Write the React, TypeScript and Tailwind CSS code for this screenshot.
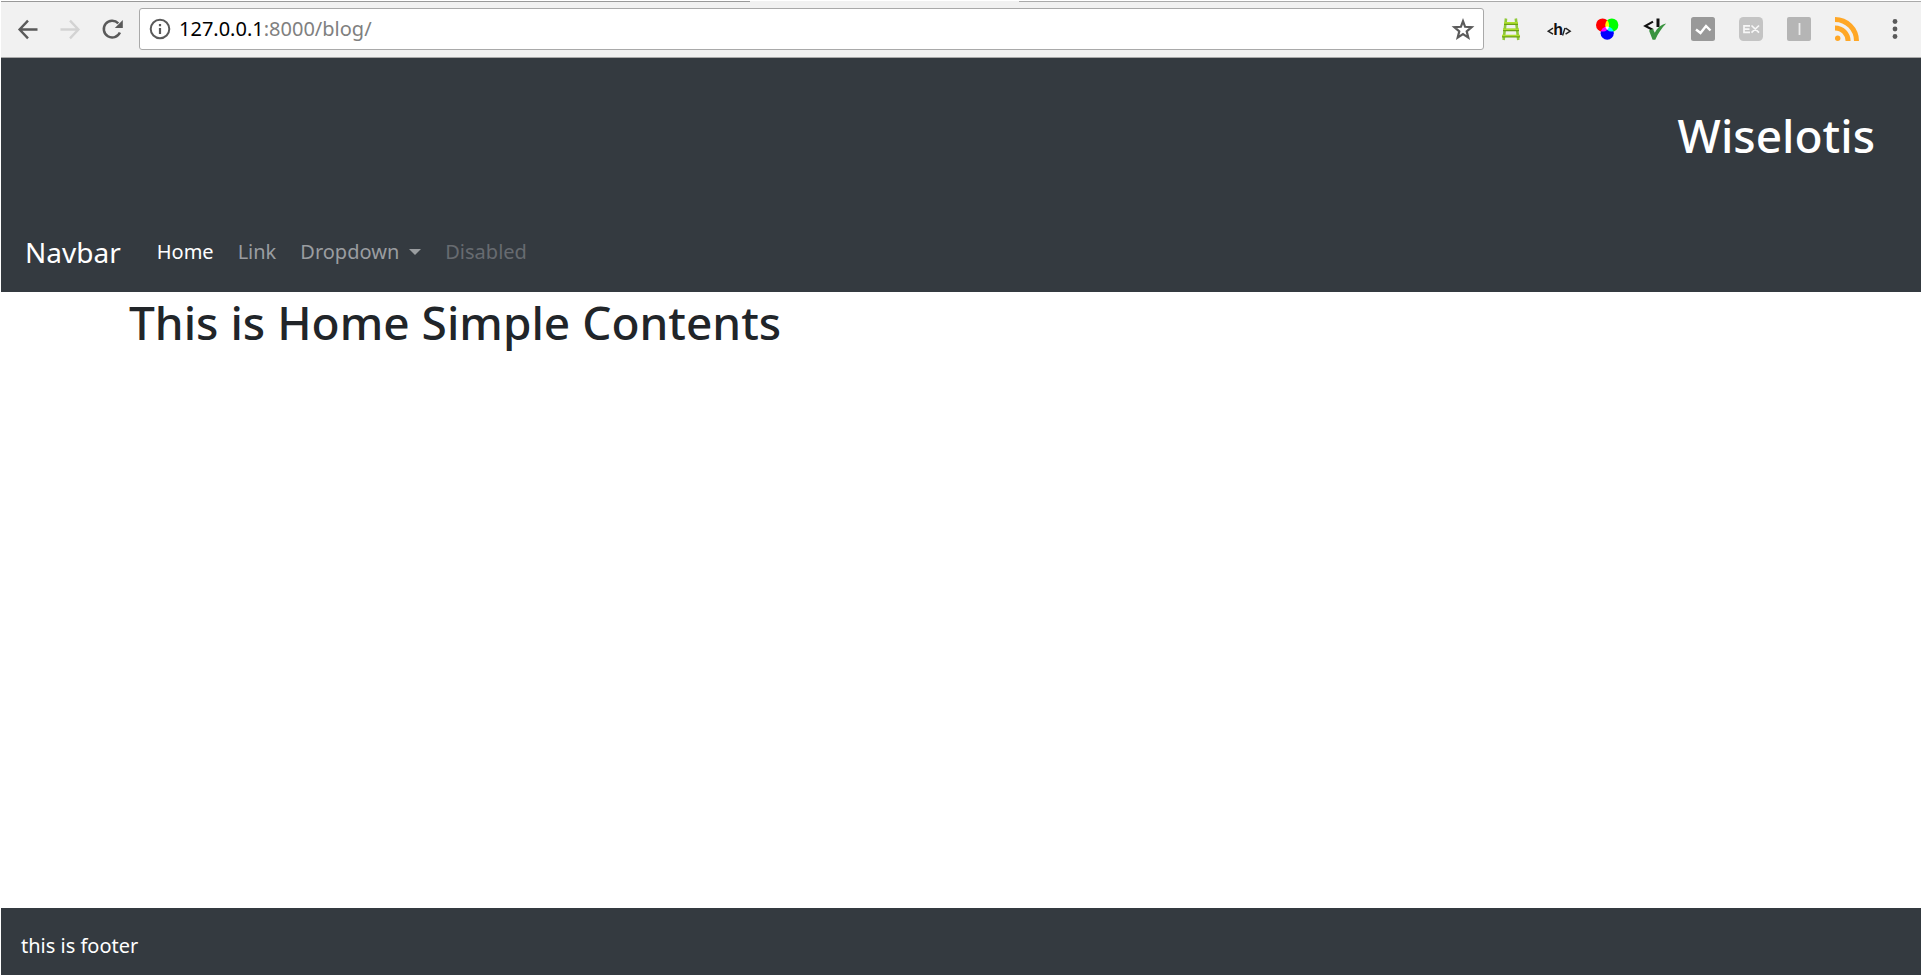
import { useState } from "react";

function BackIcon() {
  return (
    <svg viewBox="0 0 24 24" className="size-6" fill="none" stroke="currentColor" strokeWidth="2.4">
      <path d="M21.500 12.500H4M12 3.600L3.600 12.500L12 21.400" />
    </svg>
  );
}

function ForwardIcon() {
  return (
    <svg viewBox="0 0 24 24" className="size-6" fill="none" stroke="currentColor" strokeWidth="2.4">
      <path d="M2.500 12.500H20M12 3.600L20.400 12.500L12 21.400" />
    </svg>
  );
}

function ReloadIcon() {
  return (
    <svg viewBox="0 0 24 24" className="size-6">
      <path d="M18.300 6.300A8.400 8.400 0 1 0 19.900 15.500" fill="none" stroke="currentColor" strokeWidth="2.5" />
      <path d="M22.800 3v8h-8z" fill="currentColor" />
    </svg>
  );
}

function InfoIcon() {
  return (
    <svg viewBox="0 0 22 22" className="size-[22px] shrink-0">
      <circle cx="11" cy="11" r="9.300" fill="none" stroke="#5a5a5a" strokeWidth="2" />
      <path d="M9.900 10h2.200v6H9.900zM9.900 6h2.200v2.200H9.900z" fill="#5a5a5a" />
    </svg>
  );
}

function StarIcon() {
  return (
    <svg viewBox="0 0 24 24" className="size-6">
      <path
        d="M12 4.200l2.100 5.600 6.500.4-4.900 4.100 1.600 6.300-5.300-3.500-5.300 3.500 1.600-6.300-4.900-4.100 6.500-.4z"
        fill="none"
        stroke="#5a5a5a"
        strokeWidth="2.200"
      />
    </svg>
  );
}

function LadderIcon() {
  return (
    <svg viewBox="0 0 24 24" className="size-6" fill="none">
      <path d="M7 1.500L4.600 23M16.800 1.500L19.300 23" stroke="#8fc93a" strokeWidth="2.600" />
      <path d="M5 6.700h14M4 13h16M3 19.300h18" stroke="#6b9f16" strokeWidth="2.600" />
      <path d="M5 5.900h14M4 12.200h16M3 18.500h18" stroke="#aee02f" strokeWidth="1.600" />
    </svg>
  );
}

function TagIcon() {
  return (
    <svg viewBox="0 0 24 24" className="size-6 overflow-visible" fill="#111" fontFamily="'Liberation Sans', sans-serif">
      <path d="M6 11.200L1.200 14.200L6 17.200M18.600 11.200L23.200 14.200L18.600 17.200M18 11L15.600 18.500" fill="none" stroke="#222" strokeWidth="1.400" />
      <text x="6.300" y="18" fontSize="16" fontWeight="700">h</text>
    </svg>
  );
}

function ColorsIcon() {
  return (
    <svg viewBox="0 0 24 24" className="size-6">
      <g className="isolate">
        <circle cx="7.600" cy="8" r="6.600" fill="#ff0000" />
        <circle cx="16.800" cy="8" r="6.600" fill="#00ff00" className="mix-blend-screen" />
        <circle cx="12.200" cy="16.200" r="6.600" fill="#0000ff" className="mix-blend-screen" />
      </g>
    </svg>
  );
}

function ValidatorIcon() {
  return (
    <svg viewBox="0 0 24 24" className="size-6" fill="none">
      <path d="M10 4.600L2.400 8.900L10 13" stroke="#111" strokeWidth="2.200" />
      <path d="M15 1.500V10" stroke="#111" strokeWidth="3" />
      <path d="M6 13.600l3.800-1.800 2 4C14 11 17.800 7.600 23.200 6.400 18.600 11 15.200 16 12.300 22.800H9.600z" fill="#3a9440" />
    </svg>
  );
}

function TrendIcon() {
  return (
    <svg viewBox="0 0 24 24" className="size-6">
      <rect width="24" height="24" rx="2.500" fill="#999" />
      <path d="M5 12.500L9.500 16L15 9L19.500 13.500" fill="none" stroke="#fff" strokeWidth="2.400" />
    </svg>
  );
}

function ExIcon() {
  return (
    <svg viewBox="0 0 24 24" className="size-6">
      <rect width="24" height="24" rx="4.500" fill="#c4c4c4" />
      <path d="M11 8.800H5v6.600h6M5 12.100h5.500M12.500 8.500l7.500 7.200M20 8.500l-7.500 7.200" fill="none" stroke="#f7f7f7" strokeWidth="1.700" />
    </svg>
  );
}

function BarIcon() {
  return (
    <svg viewBox="0 0 24 24" className="size-6">
      <rect width="24" height="24" rx="2" fill="#b5b5b5" />
      <path d="M12.500 6v12" stroke="#ededed" strokeWidth="1.800" />
    </svg>
  );
}

function FeedIcon() {
  return (
    <svg viewBox="0 0 24 24" className="size-6">
      <circle cx="2.700" cy="21.300" r="2.700" fill="#ffa726" />
      <path d="M0 10.900A13.100 13.100 0 0 1 13.100 24M0 2.500A21.500 21.500 0 0 1 21.500 24" fill="none" stroke="#ffa726" strokeWidth="5" />
    </svg>
  );
}

function MenuIcon() {
  return (
    <svg viewBox="0 0 24 24" className="size-6" fill="#5a5a5a">
      <circle cx="12" cy="4.500" r="2.400" />
      <circle cx="12" cy="12" r="2.400" />
      <circle cx="12" cy="19.500" r="2.400" />
    </svg>
  );
}

const extensions = [
  { label: "Ladder", Icon: LadderIcon },
  { label: "Headings", Icon: TagIcon },
  { label: "Colors", Icon: ColorsIcon },
  { label: "Validator", Icon: ValidatorIcon },
  { label: "Trend", Icon: TrendIcon },
  { label: "Ex", Icon: ExIcon },
  { label: "Bar", Icon: BarIcon },
  { label: "Feed", Icon: FeedIcon },
  { label: "Menu", Icon: MenuIcon },
];

function BrowserBar() {
  return (
    <div className="border-b border-[#a9a9a9] bg-[#f1f1f1]">
      <div className="flex h-px" aria-hidden="true">
        <div className="w-[39%] bg-[#999]" />
        <div className="w-[14%]" />
        <div className="flex-1 bg-[#aaa]" />
      </div>
      <div className="flex h-[55px] items-center pr-3.5 pb-px pl-[15px]">
        <div className="flex gap-[18px] text-[#5a5a5a]">
          <button type="button" aria-label="Back"><BackIcon /></button>
          <button type="button" aria-label="Forward" className="text-[#d3d3d3]"><ForwardIcon /></button>
          <button type="button" aria-label="Reload"><ReloadIcon /></button>
        </div>
        <div className="mr-[15px] ml-[15px] flex h-[42px] flex-1 items-center rounded-[3px] border border-[#a9a9a9] bg-white pr-2 pl-[9px]">
          <InfoIcon />
          <a href="/blog/" className="ml-2 flex-1 text-[20px] leading-6 text-[#808080]">
            <span className="text-black">127.0.0.1</span>:8000/blog/
          </a>
          <button type="button" aria-label="Bookmark"><StarIcon /></button>
        </div>
        <div className="flex gap-6">
          {extensions.map(({ label, Icon }) => (
            <button key={label} type="button" aria-label={label}><Icon /></button>
          ))}
        </div>
      </div>
    </div>
  );
}

function SiteHeader() {
  const [open, setOpen] = useState(false);
  return (
    <header className="bg-[#343a40] text-white">
      <div className="flex h-[154px] justify-end pt-[47px] pr-[46px]">
        <h1 className="text-[46px] leading-[60px] font-medium">Wiselotis</h1>
      </div>
      <nav className="flex h-20 items-center pl-6 text-[20px]">
        <a href="/" className="mr-9 text-[28px] leading-10">Navbar</a>
        <ul className="flex gap-6 text-[#9a9da0]">
          <li><a href="/" className="text-white">Home</a></li>
          <li><a href="/link">Link</a></li>
          <li>
            <button type="button" aria-expanded={open} onClick={() => setOpen(!open)} className="flex items-center gap-2.5">
              Dropdown
              <span className="border-x-[6px] border-t-[6px] border-x-transparent border-t-current" />
            </button>
          </li>
          <li><a href="/disabled" aria-disabled="true" className="text-[#676b70]">Disabled</a></li>
        </ul>
      </nav>
    </header>
  );
}

export default function App() {
  return (
    <div className="flex min-h-screen flex-col bg-white p-px font-['Noto_Sans',sans-serif]">
      <BrowserBar />
      <SiteHeader />
      <main className="flex-1 pl-32">
        <h2 className="text-[46px] leading-[60px] font-medium text-[#212529]">This is Home Simple Contents</h2>
      </main>
      <footer className="flex h-[67px] items-center bg-[#343a40] pt-2 pl-5 text-[20px] text-white">
        this is footer
      </footer>
    </div>
  );
}
